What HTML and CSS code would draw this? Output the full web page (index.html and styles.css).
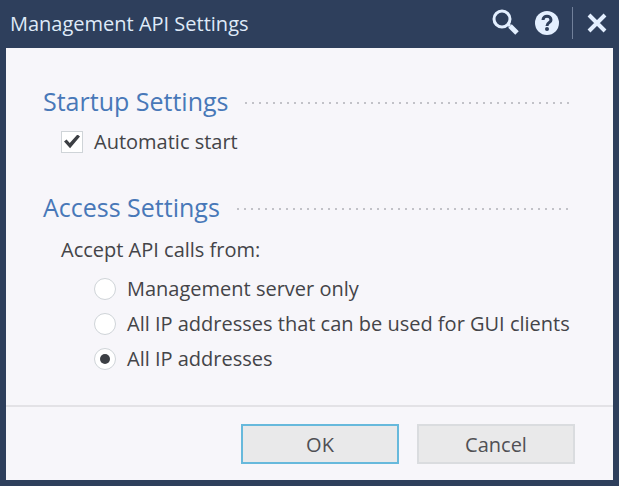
FILE: index.html
```html
<!DOCTYPE html>
<html lang="en">

<head>
  <meta charset="utf-8">
  <title>Management API Settings</title>
  <link rel="stylesheet" href="styles.css">
</head>

<body>
  <div class="dialog">
    <header class="titlebar">
      <h1 class="title">Management API Settings</h1>
      <button class="icon-btn" type="button" aria-label="Search">
        <svg width="28" height="28" viewBox="0 0 28 28">
          <circle cx="10" cy="10" r="8" fill="none" stroke="#e3efff" stroke-width="3" />
          <path d="M16 15L18 17" stroke="#e3efff" stroke-width="3" />
          <path d="M18 17L25 24" stroke="#e3efff" stroke-width="5" />
        </svg>
      </button>
      <button class="icon-btn" type="button" aria-label="Help">
        <svg width="26" height="26" viewBox="0 0 26 26">
          <circle cx="13" cy="13" r="12" fill="#e3efff" />
          <path d="M9 10C9 5 17 5 17 10C17 13 13 12 13 16" fill="none" stroke="#2e3f5c" stroke-width="3" />
          <circle cx="13" cy="19" r="2" fill="#2e3f5c" />
        </svg>
      </button>
      <span class="divider"></span>
      <button class="icon-btn" type="button" aria-label="Close">
        <svg width="20" height="20" viewBox="0 0 20 20">
          <path d="M2 2L18 18M18 2L2 18" stroke="#e3efff" stroke-width="4" />
        </svg>
      </button>
    </header>

    <form class="panel">
      <div class="content">
        <section>
          <h2 class="heading">Startup Settings</h2>
          <label class="option">
            <input class="check" type="checkbox" checked>
            Automatic start
          </label>
        </section>

        <section>
          <h2 class="heading">Access Settings</h2>
          <fieldset class="group">
            <legend class="legend">Accept API calls from:</legend>
            <label class="option">
              <input class="radio" type="radio" name="access">
              Management server only
            </label>
            <label class="option">
              <input class="radio" type="radio" name="access">
              All IP addresses that can be used for GUI clients
            </label>
            <label class="option">
              <input class="radio" type="radio" name="access" checked>
              All IP addresses
            </label>
          </fieldset>
        </section>
      </div>

      <footer class="footer">
        <button class="btn btn-primary" type="button">OK</button>
        <button class="btn" type="button">Cancel</button>
      </footer>
    </form>
  </div>
</body>

</html>
```
FILE: styles.css
```css
* {
  box-sizing: border-box;
}

body {
  margin: 0;
  font-family: "Open Sans", "Noto Sans", sans-serif;
  font-size: 20px;
  color: #444448;
}

.dialog {
  display: flex;
  flex-direction: column;
  min-height: 100vh;
  padding: 0 6px 6px;
  background: #2e3f5c;
}

.titlebar {
  display: flex;
  align-items: center;
  height: 48px;
  padding: 0 6px 2px 4px;
}

.title {
  flex: 1;
  margin: 0;
  font-size: 20px;
  font-weight: 400;
  color: #dfeaf8;
}

.icon-btn {
  display: flex;
  margin-left: 14px;
  padding: 0;
  border: 0;
  background: none;
}

.divider {
  width: 1px;
  height: 32px;
  margin-left: 12px;
  background: #71809a;
}

.panel {
  display: flex;
  flex: 1;
  flex-direction: column;
  background: #f7f6fa;
}

.content {
  flex: 1;
  padding: 35px 42px 0 37px;
}

.heading {
  display: flex;
  align-items: center;
  gap: 17px;
  height: 36px;
  margin: 0;
  font-size: 25px;
  font-weight: 400;
  color: #4878b8;
}

/* dotted rule after the heading text */
.heading::after {
  content: "";
  flex: 1;
  height: 2px;
  margin-top: 4px;
  background: repeating-linear-gradient(to right, #c2c2c8 0 2px, transparent 2px 7px);
}

.option {
  display: flex;
  align-items: center;
  gap: 11px;
  height: 35px;
  padding-left: 18px;
}

.heading + .option {
  margin-top: 5px;
}

section + section {
  margin-top: 30px;
}

.group {
  margin: 0;
  padding: 0 0 0 33px;
  border: 0;
}

.legend {
  height: 46px;
  margin-left: -15px;
  padding: 0;
  line-height: 50px;
}

.check,
.radio {
  display: grid;
  place-items: center;
  appearance: none;
  width: 22px;
  height: 22px;
  margin: 0;
  border: 1px solid #cfd4d8;
  background: #fff;
}

.radio {
  border-radius: 50%;
}

.check:checked::before {
  content: "";
  width: 16px;
  height: 14px;
  background: #3c3f44;
  clip-path: polygon(0 50%, 16% 36%, 36% 60%, 84% 0, 100% 14%, 38% 98%);
}

.radio:checked::before {
  content: "";
  width: 10px;
  height: 10px;
  border-radius: 50%;
  background: #3c3f44;
}

.footer {
  display: flex;
  justify-content: flex-end;
  gap: 18px;
  padding: 17px 38px 16px;
  border-top: 2px solid #e3e2e6;
}

.btn {
  width: 158px;
  height: 40px;
  padding: 0;
  border: 2px solid #dadcdf;
  background: #e9e9ea;
  font: inherit;
  color: #505054;
}

.btn-primary {
  border-color: #67b9dc;
}
```
